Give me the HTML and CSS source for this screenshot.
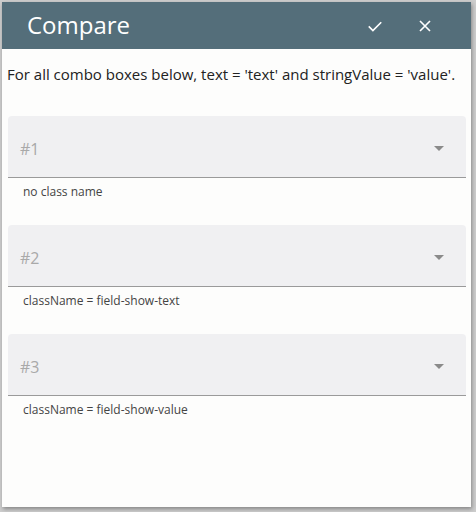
FILE: index.html
```html
<!DOCTYPE html>
<html>
<head>
<meta charset="utf-8">
<link rel="stylesheet" href="styles.css">
</head>
<body>
<div class="dialog">
  <div class="header">
    <div class="title">Compare</div>
    <div class="actions">
      <svg class="icon" width="20" height="20" viewBox="0 0 24 24"><path d="M4.5 12.5 L9.5 17.5 L19.5 7.5" fill="none" stroke="#fff" stroke-width="2"/></svg>
      <svg class="icon" width="20" height="20" viewBox="0 0 24 24"><path d="M6 6 L18 18 M18 6 L6 18" fill="none" stroke="#fff" stroke-width="2"/></svg>
    </div>
  </div>
  <div class="content">
    <p class="intro">For all combo boxes below, text = 'text' and stringValue = 'value'.</p>
    <div class="field">
      <div class="combo"><span class="ph">#1</span><span class="arrow"></span></div>
      <div class="help">no class name</div>
    </div>
    <div class="field">
      <div class="combo"><span class="ph">#2</span><span class="arrow"></span></div>
      <div class="help">className = field-show-text</div>
    </div>
    <div class="field">
      <div class="combo"><span class="ph">#3</span><span class="arrow"></span></div>
      <div class="help">className = field-show-value</div>
    </div>
  </div>
</div>
</body>
</html>
```
FILE: styles.css
```css
html, body { margin: 0; padding: 0; }
body {
  width: 476px;
  height: 512px;
  background: #cdcdcd;
  font-family: "Open Sans", "Noto Sans", sans-serif;
  padding: 2px 0 0 2px;
  box-sizing: border-box;
}
.dialog {
  width: 469px;
  height: 505px;
  background: #fdfdfc;
  box-shadow: 1px 2px 4px rgba(0,0,0,0.35);
  display: flex;
  flex-direction: column;
}
.header {
  height: 47px;
  background: #546e7a;
  display: flex;
  align-items: center;
  justify-content: space-between;
  padding: 0 0 0 25px;
}
.title {
  color: #fff;
  font-size: 24px;
  line-height: 1;
  margin-top: -2px;
}
.actions {
  display: flex;
  align-items: center;
  gap: 30px;
  padding-right: 36px;
}
.icon { display: block; }
.content {
  padding: 0 5px 0 5px;
}
.intro {
  margin: 15px 0 32px 0;
  font-size: 15px;
  line-height: 20px;
  color: #222;
}
.field {
  margin: 0 0 0 1px;
  height: 109px;
}
.combo {
  height: 61px;
  background: #f0f0f2;
  border-radius: 4px 4px 0 0;
  border-bottom: 1px solid #9a9a9a;
  display: flex;
  align-items: center;
  justify-content: space-between;
  padding: 0 22px 0 12px;
}
.ph {
  color: #a9a9a9;
  font-size: 16px;
  margin-top: 4px;
}
.arrow {
  width: 0;
  height: 0;
  border-left: 5px solid transparent;
  border-right: 5px solid transparent;
  border-top: 5px solid #8a8a8a;
  margin-top: 4px;
}
.help {
  font-size: 12px;
  color: #444;
  padding: 6px 0 0 15px;
  line-height: 16px;
}
```
